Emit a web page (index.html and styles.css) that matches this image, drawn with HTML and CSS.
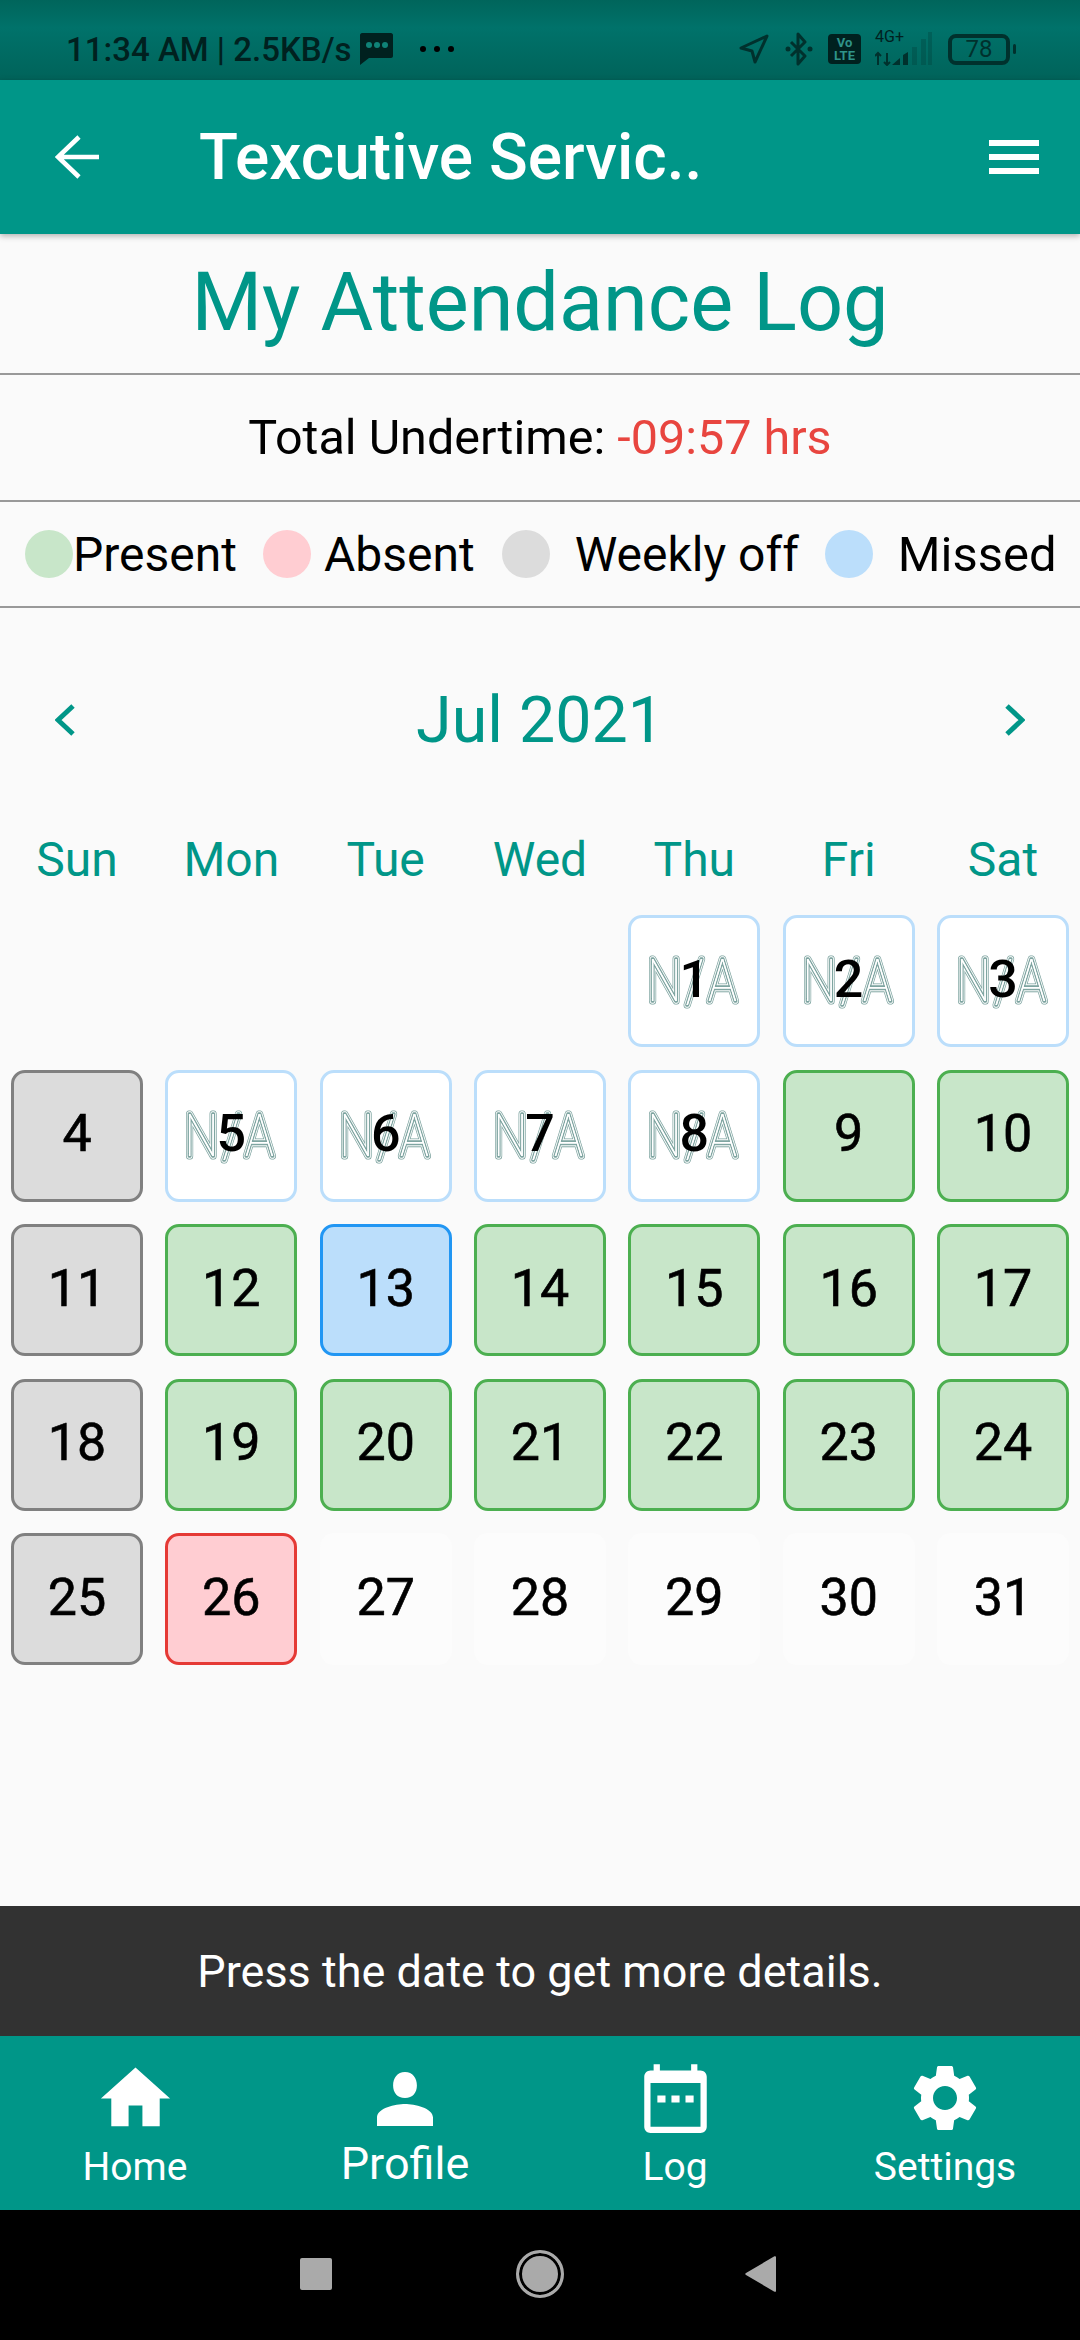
FILE: index.html
```html
<!DOCTYPE html>
<html lang="en">
<head>
	<meta charset="UTF-8">
	<title>My Attendance Log</title>
	<link rel="stylesheet" href="styles.css">
</head>
<body>
	<svg class="na-defs" width="0" height="0"><defs><text id="na-word" x="77" y="60">N/A</text></defs></svg>

	<div class="status-bar">
		<div class="status-left">
			<span class="status-text">11:34 AM | 2.5KB/s</span>
			<svg class="msg-icon" viewBox="0 0 33 32"><path d="M2 0h29c1 0 2 1 2 2v21c0 1-1 2-2 2H9l-9 7V2C0 1 1 0 2 0z" fill="#00211f"/><circle cx="9" cy="12" r="3" fill="#0f8277"/><circle cx="17" cy="12" r="3" fill="#0f8277"/><circle cx="25" cy="12" r="3" fill="#0f8277"/></svg>
			<span class="more-dots"><i></i><i></i><i></i></span>
		</div>
		<div class="status-right">
			<svg class="loc-icon" viewBox="0 0 30 30"><path d="M28 2L2 14l11 3 3 11z" fill="none" stroke="#00312d" stroke-width="3" stroke-linejoin="round"/></svg>
			<svg class="bt-icon" viewBox="0 0 28 34"><path d="M6 10l14 14-7 8V2l7 8L6 24" fill="none" stroke="#00312d" stroke-width="3" stroke-linejoin="round"/><circle cx="3" cy="17" r="2.5" fill="#00312d"/><circle cx="25" cy="17" r="2.5" fill="#00312d"/></svg>
			<span class="volte">Vo<br>LTE</span>
			<div class="signal">
				<span class="net">4G+</span>
				<svg class="signal-icon" viewBox="0 0 57 34"><path d="M3 33V21M0 24l3-3 3 3M12 21v12M9 30l3 3 3-3" fill="none" stroke="#00312d" stroke-width="2"/><path d="M17 33l8-7v7zM28 23l5-3v13h-5z" fill="#00312d"/><path d="M37 15h5v18h-5zM46 7h5v26h-5zM53 0h4v33h-4z" fill="#00312d" opacity=".25"/></svg>
			</div>
			<div class="battery"><span>78</span></div>
			<i class="battery-nub"></i>
		</div>
	</div>

	<header class="app-bar">
		<svg class="back-icon" viewBox="0 0 44 44"><path d="M44 22H4M24 2L3 22l21 20" fill="none" stroke="#fff" stroke-width="4.6"/></svg>
		<h1 class="app-title">Texcutive Servic..</h1>
		<div class="menu-icon"><i></i><i></i><i></i></div>
	</header>

	<main class="content">
		<h2 class="page-title">My Attendance Log</h2>
		<div class="undertime">Total Undertime: <span class="undertime-val">-09:57 hrs</span></div>
		<div class="legend">
			<span class="dot dot-present"></span><span class="legend-label label-present">Present</span>
			<span class="dot dot-absent"></span><span class="legend-label label-absent">Absent</span>
			<span class="dot dot-off"></span><span class="legend-label label-off">Weekly off</span>
			<span class="dot dot-missed"></span><span class="legend-label label-missed">Missed</span>
		</div>

		<div class="month-row">
			<svg class="chevron" viewBox="0 0 20 32"><path d="M18 2L3 16l15 14" fill="none" stroke="#009688" stroke-width="5"/></svg>
			<span class="month-name">Jul 2021</span>
			<svg class="chevron" viewBox="0 0 20 32"><path d="M2 2l15 14L2 30" fill="none" stroke="#009688" stroke-width="5"/></svg>
		</div>

		<div class="cal weekdays">
			<span>Sun</span><span>Mon</span><span>Tue</span><span>Wed</span><span>Thu</span><span>Fri</span><span>Sat</span>
		</div>

		<div class="cal days">
			<div class="day na first-day"><svg class="na-mark" viewBox="0 0 126 80"><use class="l1" href="#na-word"/><use class="l2" href="#na-word"/><use class="l3" href="#na-word"/><text x="77" y="60">N/A</text></svg><b>1</b></div>
			<div class="day na"><svg class="na-mark" viewBox="0 0 126 80"><use class="l1" href="#na-word"/><use class="l2" href="#na-word"/><use class="l3" href="#na-word"/><text x="77" y="60">N/A</text></svg><b>2</b></div>
			<div class="day na"><svg class="na-mark" viewBox="0 0 126 80"><use class="l1" href="#na-word"/><use class="l2" href="#na-word"/><use class="l3" href="#na-word"/><text x="77" y="60">N/A</text></svg><b>3</b></div>

			<div class="day off"><b>4</b></div>
			<div class="day na"><svg class="na-mark" viewBox="0 0 126 80"><use class="l1" href="#na-word"/><use class="l2" href="#na-word"/><use class="l3" href="#na-word"/><text x="77" y="60">N/A</text></svg><b>5</b></div>
			<div class="day na"><svg class="na-mark" viewBox="0 0 126 80"><use class="l1" href="#na-word"/><use class="l2" href="#na-word"/><use class="l3" href="#na-word"/><text x="77" y="60">N/A</text></svg><b>6</b></div>
			<div class="day na"><svg class="na-mark" viewBox="0 0 126 80"><use class="l1" href="#na-word"/><use class="l2" href="#na-word"/><use class="l3" href="#na-word"/><text x="77" y="60">N/A</text></svg><b>7</b></div>
			<div class="day na"><svg class="na-mark" viewBox="0 0 126 80"><use class="l1" href="#na-word"/><use class="l2" href="#na-word"/><use class="l3" href="#na-word"/><text x="77" y="60">N/A</text></svg><b>8</b></div>
			<div class="day present"><b>9</b></div>
			<div class="day present"><b>10</b></div>

			<div class="day off"><b>11</b></div>
			<div class="day present"><b>12</b></div>
			<div class="day missed"><b>13</b></div>
			<div class="day present"><b>14</b></div>
			<div class="day present"><b>15</b></div>
			<div class="day present"><b>16</b></div>
			<div class="day present"><b>17</b></div>

			<div class="day off"><b>18</b></div>
			<div class="day present"><b>19</b></div>
			<div class="day present"><b>20</b></div>
			<div class="day present"><b>21</b></div>
			<div class="day present"><b>22</b></div>
			<div class="day present"><b>23</b></div>
			<div class="day present"><b>24</b></div>

			<div class="day off"><b>25</b></div>
			<div class="day absent"><b>26</b></div>
			<div class="day future"><b>27</b></div>
			<div class="day future"><b>28</b></div>
			<div class="day future"><b>29</b></div>
			<div class="day future"><b>30</b></div>
			<div class="day future"><b>31</b></div>
		</div>
	</main>

	<div class="snackbar">Press the date to get more details.</div>

	<nav class="bottom-nav">
		<div class="nav-item">
			<span class="nav-icon"><svg width="83" height="83" viewBox="0 0 24 24"><path d="M10 20v-6h4v6h5v-8h3L12 3 2 12h3v8z" fill="#fff"/></svg></span>
			<span class="nav-label">Home</span>
		</div>
		<div class="nav-item">
			<span class="nav-icon"><svg width="84" height="84" viewBox="0 0 24 24"><path d="M12 12c2.21 0 3.4-1.6 3.4-3.6S14.2 4.6 12 4.6 8.600 6.400 8.600 8.400s1.190 3.600 3.400 3.600zM12 13.700c-2.670 0-8 1.100-8 3.900V20h14.900l1.100 0v-2.400c0-2.800-5.330-3.900-8-3.900z" fill="#fff"/></svg></span>
			<span class="nav-label nav-label-big">Profile</span>
		</div>
		<div class="nav-item">
			<span class="nav-icon"><svg width="75" height="75" viewBox="0 0 24 24"><path d="M20 3h-1V1h-2v2H7V1H5v2H4c-1.100 0-2 .9-2 2v16c0 1.100.9 2 2 2h16c1.100 0 2-.9 2-2V5c0-1.100-.9-2-2-2zm0 18H4V7h16v14z" fill="#fff"/><path d="M6.200 11h2.600v2.300H6.200zM10.700 11h2.600v2.300h-2.600zM15.200 11h2.600v2.300h-2.600z" fill="#fff"/></svg></span>
			<span class="nav-label">Log</span>
		</div>
		<div class="nav-item">
			<span class="nav-icon"><svg width="80" height="80" viewBox="0 0 24 24"><path d="M19.140 12.940c.04-.3.06-.61.06-.94 0-.32-.02-.64-.07-.94l2.030-1.580c.18-.14.23-.41.12-.61l-1.920-3.320c-.12-.22-.37-.29-.59-.22l-2.390.96c-.5-.38-1.030-.7-1.620-.94l-.36-2.540c-.04-.24-.24-.41-.48-.41h-3.840c-.24 0-.43.17-.47.41l-.36 2.540c-.59.24-1.130.57-1.620.94l-2.390-.96c-.22-.08-.47 0-.59.22L2.740 8.870c-.12.21-.08.47.12.61l2.030 1.580c-.05.3-.09.63-.09.94s.02.64.07.94l-2.030 1.580c-.18.14-.23.41-.12.61l1.920 3.320c.12.22.37.29.59.22l2.390-.96c.5.38 1.030.7 1.620.94l.36 2.540c.05.24.24.41.48.41h3.840c.24 0 .44-.17.47-.41l.36-2.540c.59-.24 1.130-.56 1.620-.94l2.390.96c.22.08.47 0 .59-.22l1.920-3.320c.12-.22.07-.47-.12-.61l-2.010-1.580zM12 15.600c-1.980 0-3.600-1.620-3.600-3.600s1.620-3.600 3.600-3.600 3.600 1.620 3.600 3.600-1.620 3.600-3.600 3.600z" fill="#fff"/></svg></span>
			<span class="nav-label">Settings</span>
		</div>
	</nav>

	<div class="system-nav">
		<i class="sys-square"></i>
		<i class="sys-circle"></i>
		<svg class="sys-back" viewBox="0 0 31 36"><path d="M31 1v34c0 1-1 1-2 .5L1 19c-1-.5-1-1.500 0-2L29 .5c1-.5 2-.5 2 .5z" fill="#aaa"/></svg>
	</div>
</body>
</html>
```

FILE: styles.css
```css
* {
	box-sizing: border-box;
}

body {
	margin: 0;
	width: 1080px;
	height: 2340px;
	display: flex;
	flex-direction: column;
	background-color: #fafafa;
	font-family: Roboto, "Liberation Sans", sans-serif;
	overflow: hidden;
}

/* status bar */
.status-bar {
	height: 80px;
	flex: none;
	display: flex;
	justify-content: space-between;
	align-items: center;
	padding: 0 64px 0 66px;
	background: linear-gradient(to bottom, #00655b, #00726a 35%, #00635a);
}
.status-left {
	display: flex;
	align-items: center;
	padding-top: 18px;
}
.status-text {
	font-size: 33px;
	font-weight: 500;
	color: #00211f;
}
.msg-icon {
	width: 33px;
	height: 32px;
	margin-left: 8px;
}
.more-dots {
	display: flex;
	gap: 8px;
	margin-left: 27px;
}
.more-dots i {
	width: 6px;
	height: 6px;
	border-radius: 50%;
	background-color: #000;
}
.status-right {
	display: flex;
	align-items: center;
	padding-top: 18px;
}
.loc-icon {
	width: 30px;
	height: 30px;
}
.bt-icon {
	width: 28px;
	height: 34px;
	margin-left: 16px;
}
.volte {
	width: 33px;
	height: 30px;
	margin-left: 15px;
	padding-top: 2px;
	border-radius: 4px;
	background-color: #00211f;
	color: #2f9389;
	font-size: 13px;
	font-weight: 700;
	line-height: 13px;
	text-align: center;
}
.signal {
	width: 57px;
	margin-left: 14px;
	position: relative;
	height: 34px;
}
.net {
	position: absolute;
	left: 0;
	top: -2px;
	font-size: 16px;
	line-height: 14px;
	color: #00211f;
}
.signal-icon {
	width: 57px;
	height: 34px;
}
.battery {
	width: 62px;
	height: 31px;
	margin-left: 16px;
	border: 4px solid #00312d;
	border-radius: 8px;
	color: #00312d;
	font-size: 24px;
	line-height: 23px;
	text-align: center;
}
.battery-nub {
	width: 3px;
	height: 10px;
	margin-left: 3px;
	background-color: #00312d;
	border-radius: 2px;
}

/* app bar */
.app-bar {
	height: 154px;
	flex: none;
	display: flex;
	align-items: center;
	padding: 0 41px 0 55px;
	background-color: #009688;
	box-shadow: 0 2px 6px rgba(0, 0, 0, 0.3);
	position: relative;
}
.back-icon {
	width: 44px;
	height: 44px;
}
.app-title {
	flex: 1;
	margin: 0 0 0 100px;
	color: #fff;
	font-size: 64px;
	font-weight: 500;
}
.menu-icon {
	display: flex;
	flex-direction: column;
	gap: 8px;
}
.menu-icon i {
	display: block;
	width: 50px;
	height: 6px;
	background-color: #fff;
}

/* header rows */
.content {
	flex: 1;
}
.page-title {
	margin: 0;
	height: 141px;
	padding-bottom: 2px;
	display: flex;
	align-items: center;
	justify-content: center;
	border-bottom: 2px solid #999;
	color: #009688;
	font-size: 81px;
	font-weight: 400;
}
.undertime {
	height: 127px;
	display: flex;
	align-items: center;
	justify-content: center;
	gap: 12px;
	border-bottom: 2px solid #999;
	font-size: 48.5px;
	color: #000;
}
.undertime-val {
	color: #e8453f;
}
.legend {
	height: 106px;
	display: flex;
	align-items: center;
	padding: 0 25px;
	border-bottom: 2px solid #999;
	font-size: 48px;
	color: #000;
	white-space: nowrap;
}
.dot {
	width: 48px;
	height: 48px;
	flex: none;
	border-radius: 50%;
}
.dot-present {
	background-color: #c8e6c9;
}
.dot-absent {
	background-color: #ffcdd2;
}
.dot-off {
	background-color: #dcdcdc;
}
.dot-missed {
	background-color: #bbdefb;
}
.label-present {
	margin: 0 26px 0 0;
}
.label-absent {
	margin: 0 27px 0 13px;
}
.label-off {
	margin: 0 26px 0 25px;
}
.label-missed {
	margin-left: 25px;
	font-size: 49px;
}

/* calendar */
.month-row {
	height: 120px;
	margin-top: 52px;
	padding: 0 55px;
	display: flex;
	align-items: center;
	justify-content: space-between;
}
.chevron {
	width: 20px;
	height: 32px;
}
.month-name {
	color: #009688;
	font-size: 64.5px;
}
.cal {
	display: grid;
	grid-template-columns: repeat(7, 132px);
	column-gap: 22.33px;
	padding: 0 11px;
}
.weekdays {
	height: 80px;
	margin-top: 39px;
	align-items: center;
	text-align: center;
	color: #009688;
	font-size: 48px;
}
.days {
	margin-top: 16px;
	grid-auto-rows: 132px;
	row-gap: 22.5px;
}
.day {
	display: grid;
	place-items: center;
	border: 3px solid transparent;
	border-radius: 14px;
}
.day b {
	grid-area: 1 / 1;
	margin-top: -4px;
	font-size: 52px;
	font-weight: 400;
	-webkit-text-stroke: 0.6px #000;
	color: #000;
}
.first-day {
	grid-column-start: 5;
}
.na {
	background-color: #fff;
	border-color: #bbdefb;
}
.na b {
	font-weight: 500;
	-webkit-text-stroke: 0;
}
.off {
	background-color: #dcdcdc;
	border-color: #808080;
}
.present {
	background-color: #c8e6c9;
	border-color: #4caf50;
}
.missed {
	background-color: #bbdefb;
	border-color: #2196f3;
}
.absent {
	background-color: #ffcdd2;
	border-color: #e53935;
}
.future {
	background-color: #fcfcfc;
	border-color: #fcfcfc;
}

/* the N/A stamp: thin word stroked in rings, round joins need svg text */
.na-defs {
	position: absolute;
}
.na-mark {
	grid-area: 1 / 1;
	width: 126px;
	height: 80px;
}
.na-mark text,
#na-word {
	font-size: 59px;
	font-weight: 100;
	font-kerning: none;
	letter-spacing: 5px;
	text-anchor: middle;
	transform: scaleX(0.82);
	stroke-linejoin: round;
	stroke-linecap: round;
	fill: #fff;
	paint-order: stroke fill;
}
.na-mark .l1 {
	stroke: #7fa5a1;
	stroke-width: 7.1px;
}
.na-mark .l2 {
	stroke: #fff;
	stroke-width: 5.3px;
}
.na-mark .l3 {
	stroke: #7fa5a1;
	stroke-width: 3.3px;
}

/* snackbar and navigation */
.snackbar {
	height: 130px;
	flex: none;
	display: flex;
	align-items: center;
	justify-content: center;
	background-color: #323232;
	color: #fff;
	font-size: 45px;
}
.bottom-nav {
	height: 174px;
	flex: none;
	display: grid;
	grid-template-columns: repeat(4, 1fr);
	padding-top: 20px;
	background-color: #009688;
}
.nav-item {
	display: flex;
	flex-direction: column;
	align-items: center;
	color: #fff;
}
.nav-icon {
	height: 84px;
	display: flex;
	align-items: center;
	justify-content: center;
}
.nav-label {
	font-size: 39px;
	line-height: 54px;
}
.nav-label-big {
	font-size: 45px;
	line-height: 48px;
}
.system-nav {
	height: 130px;
	flex: none;
	display: flex;
	align-items: center;
	background-color: #000;
	padding: 0 0 2px 300px;
}
.sys-square {
	width: 32px;
	height: 32px;
	border-radius: 2px;
	background-color: #aaa;
}
.sys-circle {
	width: 48px;
	height: 48px;
	margin-left: 184px;
	border: 3px solid #aaa;
	border-radius: 50%;
	background-color: #aaa;
	box-shadow: inset 0 0 0 3px #000;
}
.sys-back {
	width: 31px;
	height: 36px;
	margin-left: 181px;
}
```
